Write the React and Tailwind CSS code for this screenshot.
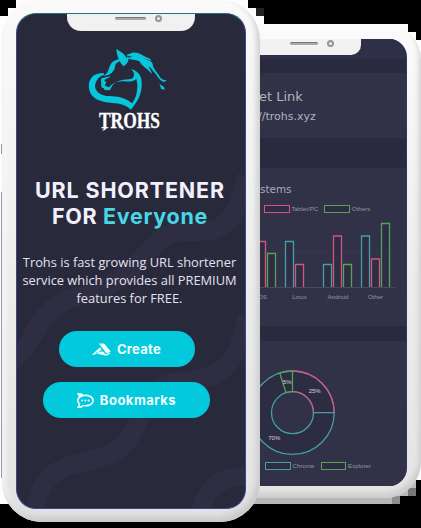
import React from "react";
import { FaAccusoft, FaRocketchat } from "react-icons/fa";

const RED = "#d4567d";
const GREEN = "#56a356";
const TEAL = "#469fa6";

function Silhouette() {
  return (
    <svg className="absolute inset-0" width="421" height="528" viewBox="0 0 421 528">
      <path
        fill="#fdfdfd"
        d="M16 0H248V8H256V16H264V24H408V32H416V40H421V480H416V488H408V496H400V504H0V16H8V8H16Z"
      />
      <path fill="#222" d="M256 8H264V16H256Z" />
      <path fill="#b6b6b6" d="M250 490H392V504H250Z" />
      <path fill="#8e8e8e" d="M392 496H400V504H392Z" />
      <path fill="#777" d="M408 488H416V496H408Z" />
      <path fill="#b9b9b9" d="M392 488H408V496H392ZM408 480H416V488H408Z" />
      <path fill="#9898b0" d="M1 144h1v10h-1zM1 192h1v286h-1z" />
    </svg>
  );
}

function Speaker({ className, bar }) {
  return (
    <div className={"flex items-center " + className}>
      <span className={"h-[3px] rounded-full border-t border-[#777] bg-[#aaa] " + bar} />
      <span className="ml-[9px] size-[7px] rounded-full border-2 border-[#969696] bg-[#ececec]" />
    </div>
  );
}

function Key({ color, label }) {
  return (
    <span className="flex items-center gap-[2px]">
      <span className="h-[8px] w-[25.5px] border bg-[#2c2c42]" style={{ borderColor: color }} />
      {label}
    </span>
  );
}

const BARS = [
  [257, 241, RED],
  [267, 253, GREEN],
  [285, 241, TEAL],
  [295, 264, RED],
  [323, 264, TEAL],
  [333, 235.5, RED],
  [343, 264, GREEN],
  [361, 235.5, TEAL],
  [371, 258.5, RED],
  [381, 223, GREEN],
];

function BarChart() {
  return (
    <svg className="mt-[5px] block" width="147" height="84" viewBox="260 218 147 84">
      <path d="M260 252.5H395" stroke="#36364d" />
      <path d="M260 287.5H395" stroke="#4a4a5e" />
      {BARS.map(([x, y, c]) => (
        <path key={x} d={`M${x + 0.5} 287V${y + 0.5}H${x + 8.5}V287`} fill="#2d2d43" stroke={c} strokeWidth="1.3" />
      ))}
      <g fill="#96969f" fontSize="6.1" fontFamily="Liberation Sans, sans-serif" textAnchor="middle">
        <text x="262.5" y="298.5">OS</text>
        <text x="299.5" y="298.5">Linux</text>
        <text x="338" y="298.5">Android</text>
        <text x="375.5" y="298.5">Other</text>
      </g>
    </svg>
  );
}

function Donut() {
  return (
    <svg className="block" width="147" height="90" viewBox="260 364.3 147 90">
      <circle cx="292.5" cy="409" r="31.5" fill="none" stroke="#2c2c42" strokeWidth="20" />
      <g fill="none" strokeWidth="1.3">
        <circle cx="292.5" cy="409" r="41.7" stroke={TEAL} />
        <circle cx="292.5" cy="409" r="21" stroke={TEAL} />
        <path d="M292.5 367.3A41.7 41.7 0 0 1 334.2 409M292.5 388A21 21 0 0 1 313.5 409" stroke={RED} />
        <path d="M313.5 409H334.2" stroke={TEAL} />
        <path d="M292.5 367.3V388A21 21 0 0 0 286 389L279.7 369.3A41.7 41.7 0 0 1 292.5 367.3" stroke={GREEN} />
      </g>
      <g fill="#d5d5dd" fontSize="6" fontFamily="Liberation Sans, sans-serif" textAnchor="middle">
        <text x="287.3" y="380">5%</text>
        <text x="314.7" y="389">25%</text>
        <text x="274.3" y="436.8">70%</text>
      </g>
    </svg>
  );
}

function BackPhone() {
  return (
    <div className="absolute left-[220px] top-[24px] h-[474px] w-[201px] overflow-hidden rounded-r-[36px] bg-gradient-to-b from-[#fbfbfb] via-[#ededed] to-[#e4e4e4] pl-[40px] pt-[15px] shadow-[inset_-2px_-5px_5px_#cdcdcd]">
      <div className="h-[447px] w-[147px] overflow-hidden rounded-r-[18px] border-r border-[#34346a] bg-[#2a2a3e]">
        <div className="flex h-[20px] bg-[#2f2f47]">
          <div className="h-[16px] w-[101px] rounded-br-[10px] bg-[#f2f2f2]">
            <Speaker className="pl-[30px] pt-px" bar="w-[28px]" />
          </div>
        </div>
        <div className="mt-[14px] h-[65px] bg-[#313148] pt-[14px] font-['DejaVu_Sans',sans-serif] text-[#b3b3bc]">
          <p className="-ml-px text-[13px] leading-[20px]">et Link</p>
          <p className="-ml-[2px] text-[11px] leading-[19px]">//trohs.xyz</p>
        </div>
        <div className="mt-[30px] h-[158px] bg-[#313148] pt-[14px]">
          <p className="font-['DejaVu_Sans',sans-serif] text-[10.4px] leading-[15px] text-[#aaaab4]">stems</p>
          <div className="mt-[8px] flex h-[8px] items-center gap-[6px] pl-[4px] font-['Liberation_Sans',sans-serif] text-[6.2px] leading-[8px] text-[#96969f]">
            <Key color={RED} label="Tablet/PC" />
            <Key color={GREEN} label="Others" />
          </div>
          <BarChart />
        </div>
        <div className="mt-[15px] h-[145px] bg-[#313148] pt-[27px]">
          <Donut />
          <div className="mt-[4px] flex h-[8px] items-center gap-[6px] pl-[5px] font-['Liberation_Sans',sans-serif] text-[6.2px] leading-[8px] text-[#96969f]">
            <Key color={TEAL} label="Chrome" />
            <Key color={GREEN} label="Explorer" />
          </div>
        </div>
      </div>
    </div>
  );
}

function Waves() {
  return (
    <svg className="absolute inset-0" width="229" height="495" viewBox="16 13 229 495">
      <g fill="none" stroke="#2f2d42" strokeWidth="19">
        <path d="M12 358C36 345 30 314 68 298C130 284 138 256 152 246C166 226 186 232 206 230C232 226 236 208 246 175" />
        <path d="M33 514C42 444 98 474 126 440C146 412 140 386 175 381C222 380 238 362 246 314" />
        <path d="M200 514C203 484 225 473 250 476" />
      </g>
    </svg>
  );
}

function Logo() {
  return (
    <div className="flex flex-col items-center">
      <svg className="-ml-[4px]" width="80" height="62" viewBox="22 24 240 186" fill="#06c6dc">
        <path d="M107 27C120 35 133 42 137 54L142 49C147 60 140 72 129 79C120 69 110 59 107 27Z" />
        <path d="M121 57C91 60 88 75 83 91C81 99 75 103 69 107C82 108 93 102 97 94C105 86 101 77 106 71C111 66 118 66 121 57Z" />
        <path d="M69 99C38 98 21 118 25 145C30 181 67 187 102 190C128 192 139 199 151 209C166 190 186 165 183 125C182 104 170 93 151 87C161 96 163 107 156 115C143 122 118 115 99 132C92 138 93 144 87 151L72 150L69 144L64 143L62 139L71 123L77 126L72 137L85 142C96 128 112 122 132 124C149 126 160 124 167 116C174 143 169 171 154 190C132 169 98 168 77 168C47 162 36 143 48 122C54 111 62 107 70 105Z" />
        <path d="M62 115L75 112L90 108C85 114 77 116 72 119L69 132L61 139C64 129 59 123 62 115Z" />
        <path d="M136 46C154 35 177 43 194 56C204 62 217 65 216 73L218 82C224 94 235 103 238 112C244 120 252 120 258 121L251 126C233 121 230 104 219 95C211 86 208 79 204 82C209 88 213 94 214 103C202 86 182 79 176 64C164 57 151 62 140 53L156 51Z" />
        <path d="M148 41C160 33 177 39 190 48C201 55 210 54 212 62C196 58 182 48 148 41Z" />
        <path d="M236 132L249 140L253 149L242 147Z" />
      </svg>
      <svg className="block overflow-visible" width="66" height="22" viewBox="0 0 66 22">
        <text
          x="2"
          y="18"
          fill="#fff"
          stroke="#fff"
          strokeWidth=".3"
          fontFamily="Liberation Serif, serif"
          fontWeight="700"
          fontSize="24"
          textLength="61"
          lengthAdjust="spacingAndGlyphs"
        >
          TROHS
        </text>
        <path d="M7 17C7 19 6 20 5 20.500C8 21 9.500 19 9.500 17ZM23 16C24 19 25 20 28 20C26 19 26 18 25.500 16Z" fill="#fff" />
      </svg>
    </div>
  );
}

function FrontPhone() {
  return (
    <div className="absolute left-[2px] top-0 h-[522px] w-[258px] rounded-[40px] bg-gradient-to-b from-[#fafafa] via-[#eeeeee] to-[#e2e2e2] pl-[14px] pt-[13px] shadow-[inset_-3px_-5px_6px_#c9c9c9,inset_3px_0_4px_#fafafa]">
      <div className="relative h-[496px] w-[230px] overflow-hidden rounded-[20px] border border-[#40448a] border-t-[#287083] bg-[#28293b]">
        <Waves />
        <div className="relative flex flex-col items-center">
          <div className="h-[18px] w-[128px] self-start rounded-b-[14px] bg-[#f1f1f1] ml-[50px] -mt-px">
            <Speaker className="pl-[48px] pt-[2px]" bar="w-[31px]" />
          </div>
          <div className="-ml-[3px] mt-[17px]">
            <Logo />
          </div>
          <h1 className="-ml-[2px] mt-[46px] whitespace-nowrap text-center font-['Inter',sans-serif] text-[21.5px] font-bold leading-[25.5px] text-[#f3f0fd]">
            <span className="block tracking-[0.85px]">URL SHORTENER</span>
            <span className="block tracking-[0.7px]">
              FOR <span className="text-[#48d7e5]">Everyone</span>
            </span>
          </h1>
          <p className="-ml-[3px] mt-[24px] whitespace-nowrap text-center font-['Open_Sans',sans-serif] text-[12.85px] leading-[18.1px] text-[#e5e2ef]">
            Trohs is fast growing URL shortener
            <br />
            service which provides all PREMIUM
            <br />
            features for FREE.
          </p>
          <button className="-ml-[9px] mt-[24px] flex h-[36px] w-[136px] items-center justify-center gap-[6px] rounded-full bg-[#03c9dd] font-['Inter',sans-serif] text-[13px] font-bold tracking-[0.3px] text-[#f2fdff]">
            <FaAccusoft className="h-[15px] w-[19px]" />
            Create
          </button>
          <button className="-ml-[9px] mt-[15px] flex h-[36px] w-[167px] items-center justify-center gap-[6px] rounded-full bg-[#03c9dd] font-['Inter',sans-serif] text-[13px] font-bold tracking-[0.5px] text-[#f2fdff]">
            <FaRocketchat className="size-[17px]" />
            Bookmarks
          </button>
        </div>
      </div>
    </div>
  );
}

export default function App() {
  return (
    <main className="relative h-[528px] w-[421px] overflow-hidden bg-black">
      <Silhouette />
      <BackPhone />
      <FrontPhone />
    </main>
  );
}
